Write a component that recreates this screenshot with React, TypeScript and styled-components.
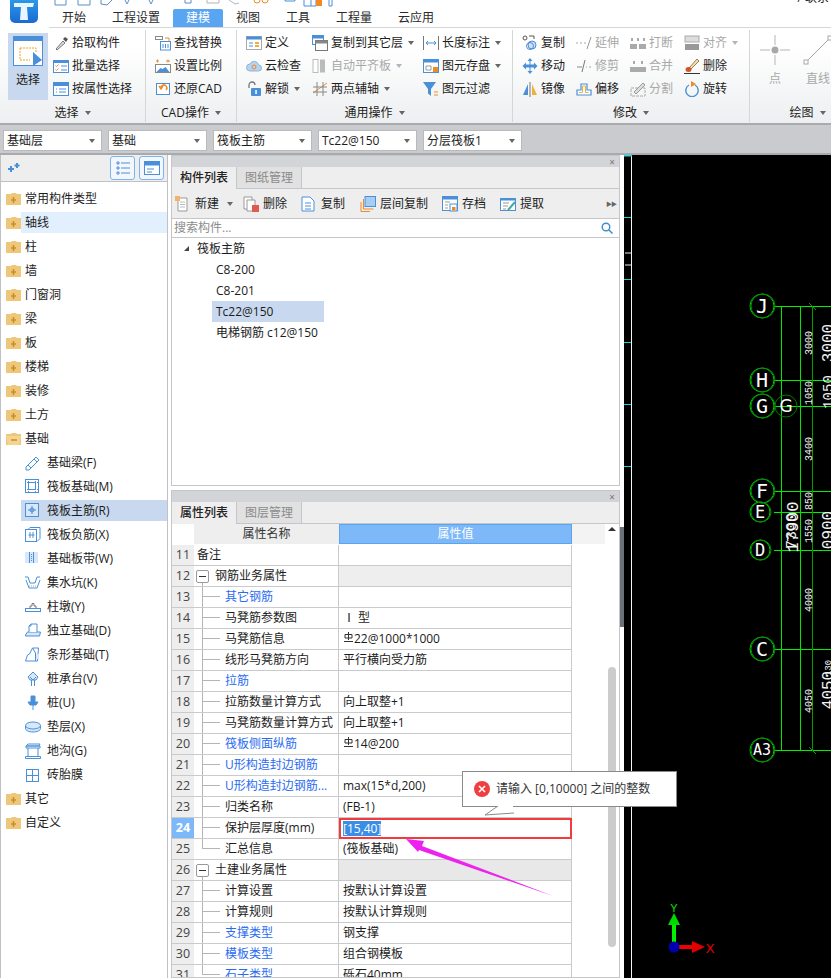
import React from "react";
import styled, { createGlobalStyle } from "styled-components";

const Global = createGlobalStyle`
  html, body { margin: 0; padding: 0; background: #fff; }
  body { font: 12px/1 "Open Sans", "Noto Sans CJK SC", sans-serif; color: #1c1c1c; }
  * { box-sizing: border-box; }
`;

const B = "#4a90d9";
const O = "#f08a24";
const icons: Record<string, React.ReactNode> = {
  pick: <><path d="M3 14l7-8 2 2-8 7z" fill="#ddd" stroke="#777" /><path d="M10 4l2-2 3 2-2 3z" fill="#555" /></>,
  batch: <><rect x="0.500" y="2.500" width="15" height="12" fill="#fff" stroke={B} /><rect x="0.500" y="2.500" width="15" height="2.500" fill={B} /><path d="M2.500 7.500l1 1 2-2M2.500 11.500l1 1 2-2" stroke={O} fill="none" /><path d="M8 8h6M8 12h6" stroke={B} /></>,
  attr: <><rect x="0.500" y="1.500" width="15" height="13" fill="#fff" stroke={B} /><rect x="0.500" y="1.500" width="15" height="3.500" fill={B} /><path d="M3 8h1M6 8h7M3 11h1M6 11h7" stroke={B} /></>,
  find: <><rect x="0.500" y="1.500" width="7" height="3" fill="#fff" stroke="#888" /><path d="M10 3h4v3" stroke={O} fill="none" /><rect x="5.500" y="6.500" width="10" height="8.500" fill="#fff" stroke={B} /><path d="M8 9v4M10.500 9v4M13 9v4" stroke={B} /></>,
  scale: <><path d="M1 3h3M2.500 1.500v3M11 3h4M13 1.500v3" stroke={O} /><rect x="0.500" y="6.500" width="15" height="8" fill="#fff" stroke="#888" /><path d="M1.500 14l4-4 2 1 3-2 4 5z" fill={B} /></>,
  restore: <><rect x="1.500" y="2.500" width="13" height="11" fill="#fff" stroke={B} /><path d="M11 9a3 3 0 1 0-5-1M4 5l2 3 2-3" stroke={O} strokeWidth="1.500" fill="none" /></>,
  define: <><rect x="0.500" y="1.500" width="15" height="13" fill="#fff" stroke="#aaa" /><rect x="0.500" y="1.500" width="15" height="3" fill={B} /><path d="M3 8h4M3 11h4" stroke={B} /><path d="M9 8h4M9 11h4" stroke="#f0b040" strokeWidth="2" /></>,
  cloud: <><path d="M4 13a3.500 3.500 0 0 1 0-7 4.500 4.500 0 0 1 8.500 1 3 3 0 0 1 0 6z" fill="#b6d3f0" stroke="#8ab4de" /><circle cx="8" cy="9" r="2" fill="none" stroke={O} /></>,
  lock: <><path d="M3 7V4a3 3 0 0 1 6 0" fill="none" stroke="#777" strokeWidth="1.300" /><rect x="5" y="7" width="10" height="8" rx="1" fill={B} /><rect x="9.300" y="9" width="1.500" height="4" fill="#fff" /></>,
  copyLayer: <><rect x="0.500" y="0.500" width="11" height="9" fill="#fff" stroke={B} /><rect x="0.500" y="0.500" width="11" height="3" fill={B} /><rect x="3.500" y="5.500" width="12" height="10" fill="#fff" stroke="#777" /><rect x="3.500" y="5.500" width="12" height="3" fill="#888" /></>,
  alignB: <><rect x="1" y="1.500" width="5" height="13" fill="#fff" stroke="#bbb" /><rect x="8" y="1.500" width="5" height="13" fill="#bbb" /></>,
  twoPoint: <><path d="M1 12L15 2" stroke={O} /><path d="M5 1v14M11 1v14M1 6h14M1 11h14" stroke="#888" /></>,
  length: <><path d="M0.500 1v14M15.500 1v14" stroke="#777" /><path d="M3 8h10M3 8l2-2M3 8l2 2M13 8l-2-2M13 8l-2 2" stroke={B} fill="none" /></>,
  save: <><rect x="0.500" y="1.500" width="15" height="13" fill="#fff" stroke={B} /><rect x="0.500" y="1.500" width="15" height="3" fill={B} /><path d="M3 8h5v4H3z" fill="none" stroke="#999" /><rect x="10" y="9" width="5" height="5" fill={O} /></>,
  filter: <><path d="M0 1h13L8 8v7L5 12.500V8z" fill={B} /><path d="M11 11h4M11 14h4" stroke={O} /></>,
  copy: <><circle cx="3" cy="3" r="2" fill="#fff" stroke="#555" /><path d="M7 1h5v3" stroke="#555" fill="none" /><circle cx="10" cy="10" r="4" fill="#cfe2f6" stroke={B} /><circle cx="8" cy="11" r="3.500" fill="none" stroke={B} /></>,
  move: <path d="M8 0l2.500 3h-2v3.500H12v-2l3.500 3.500L12 11.500v-2H8.500V13h2L8 16l-2.500-3h2V9.500H4v2L.5 8 4 4.500v2h3.500V3h-2z" fill={B} />,
  mirror: <><path d="M6 3v11H1z" fill={B} /><path d="M8 1v15" stroke="#777" /><path d="M10 3v11h5z" fill="#f0b040" /></>,
  extend: <><path d="M0 8h2M4 8h2M8 8h2" stroke="#aaa" /><path d="M11 14l4-12" stroke="#999" /></>,
  trim: <><path d="M1 9h5" stroke="#888" /><path d="M10 9h1M13 9h2" stroke="#aaa" /><path d="M6 14l3-12" stroke="#777" /></>,
  offset: <><path d="M1 14V9h4V3h6v6h4v5z" fill="#fff" stroke={B} strokeWidth="1.200" /><path d="M3 11.500h3.500V5h3v6.500h3" fill="none" stroke="#f0b040" /></>,
  broke: <><path d="M1 3h2v3H1zM7 3h2v3H7zM13 3h2v3h-2z" fill="#aaa" /><rect x="0" y="9" width="7" height="5" fill="#aaa" /><rect x="9" y="9" width="7" height="5" fill="#aaa" /></>,
  merge: <><path d="M3 3h2v3H3zM11 3h2v3h-2z" fill="#aaa" /><rect x="0" y="9" width="16" height="5" fill="#aaa" /></>,
  split: <><path d="M1 7h14v8H1z" fill="none" stroke="#aaa" strokeDasharray="3 1" /><path d="M4 11l9-9 2 2-9 9z" fill="#ddd" stroke="#999" /></>,
  alignR: <><rect x="1" y="1" width="14" height="6" fill="#ddd" stroke="#aaa" /><rect x="1" y="9" width="14" height="6" fill="#999" /></>,
  del: <><path d="M5 10l8-9 2 2-8 8z" fill="#f2dcb0" stroke="#a08050" /><ellipse cx="4.500" cy="11.500" rx="3" ry="2.500" fill="#d0562a" /><path d="M0 15.500h16" stroke="#333" /></>,
  rotate: <><path d="M5 4a6.200 6.200 0 1 0 6 0" fill="none" stroke={B} strokeWidth="1.400" /><path d="M7 0v6l5-3z" fill={O} /></>,
  beam: <><path d="M1 12L11 2l3 3L4 15H1z" fill="#fff" stroke={B} /><path d="M3 10l3 3M9 4l3 3" stroke={B} /></>,
  raft: <><rect x="0.500" y="0.500" width="13" height="13" fill="#fff" stroke={B} /><rect x="3.500" y="3.500" width="7" height="7" fill="none" stroke={B} /><path d="M0 3.500h14M0 10.500h14M3.500 0v14M10.500 0v14" stroke={B} strokeDasharray="1 1" /></>,
  main: <><rect x="0.500" y="0.500" width="13" height="13" fill="#d8e8fa" stroke={B} /><path d="M7 3v8M3 7h8" stroke={B} /><circle cx="7" cy="7" r="2" fill="none" stroke={B} /></>,
  neg: <><rect x="0.500" y="2.500" width="11" height="12" fill="#fff" stroke={B} /><path d="M3 2.500l2-2h10v11l-3 3M3.500 8h6M5 5v6M8 5v6" stroke={B} fill="none" /></>,
  band: <><rect x="0" y="1" width="13" height="11" fill="#d8e8fa" /><path d="M4.500 1v11M8.500 1v11" stroke={B} /><path d="M6.500 3v8" stroke={B} strokeDasharray="1 1" /></>,
  pit: <><path d="M0 2h3l2 6h5l2-6h3M1 5l3 8h8l3-8" fill="none" stroke={B} /><path d="M4 11h8" stroke="#aaa" strokeDasharray="1 1" /></>,
  pier: <><rect x="0.500" y="9.500" width="15" height="3" fill="#fff" stroke={B} /><path d="M5 9.500V7h2V4.500h2V7h2v2.500" fill="none" stroke="#777" /></>,
  iso: <><path d="M0.500 12l2-3h13l-1 4h-14z" fill="#d8e8fa" stroke={B} /><path d="M4 9V3l2-2h6v8" fill="#fff" stroke={B} /><path d="M6 1v2H4" stroke={B} fill="none" /></>,
  strip: <><path d="M0.500 14l2-6 2-1 3-6h6l-1 13z" fill="#fff" stroke={B} /><path d="M7.500 1l3 5v8" stroke={B} fill="none" /><rect x="11" y="7" width="3" height="5" fill="#d8e8fa" /></>,
  cap: <><path d="M8 1l5 5-2 3H5L3 6z" fill="#d8e8fa" stroke={B} /><path d="M6.500 9v6M9.500 9v6M5 6l3 3 3-3" stroke={B} fill="none" /></>,
  pile: <><path d="M6 1h4v6H6zM3 7h10l-2 3H5zM8 10v5" fill={B} stroke={B} /></>,
  cushion: <><path d="M0.500 6.500v3c0 2 3.500 3.500 7.500 3.500s7.500-1.500 7.500-3.500v-3" fill="#d8e8fa" stroke={B} /><ellipse cx="8" cy="6.500" rx="7.500" ry="3.500" fill="#d8e8fa" stroke={B} /></>,
  trench: <><path d="M1 3h13l1-2H3zM1 3h14v2H1zM3 5v8M13 5v8M0.500 13.500h15v2H.5z" fill="#fff" stroke={B} /></>,
  brick: <><rect x="1.500" y="2.500" width="12" height="12" fill="#fff" stroke={B} /><path d="M7.500 2.500v12M1.500 8.500h12" stroke={B} /></>,
  newDoc: <><path d="M3 2h9v13H3z" fill="#fff" stroke="#999" /><path d="M5 6h5M5 8.500h5M5 11h5" stroke="#bbb" /><rect x="0" y="0" width="5" height="5" fill="#f6b26b" /></>,
  delDoc: <><path d="M1 1h8v12H1z" fill="#fff" stroke="#999" /><path d="M4 4h8v11H4z" fill="#fff" stroke="#999" /><rect x="9" y="9" width="7" height="7" fill="#e05a50" /></>,
  copyDoc: <><path d="M1 1h8l4 4v10H1z" fill="#fff" stroke={B} /><path d="M4 7h6M4 10h6M4 13h6" stroke={B} /></>,
  layerCopy: <><rect x="5" y="0.500" width="10.500" height="10" fill="#a8cdf5" stroke={B} /><path d="M3.500 3v10h10M1 6v9.500h9" stroke={O} fill="none" /></>,
  archive: <><rect x="0.500" y="0.500" width="15" height="14" fill="#fff" stroke={B} /><rect x="0.500" y="0.500" width="15" height="3" fill={B} /><path d="M3 6h5M3 9h3M3 12h3" stroke="#999" /><rect x="8" y="8" width="7" height="7" fill="#fff" stroke={B} /><rect x="10" y="11" width="3.500" height="3.500" fill={O} /></>,
  extract: <><rect x="0.500" y="2.500" width="15" height="12" fill="#fff" stroke={B} /><rect x="0.500" y="2.500" width="15" height="2" fill={B} /><path d="M3 7h6M3 10h5M3 13h3" stroke="#999" /><path d="M8 14l7-8" stroke="#4a9" strokeWidth="2" /></>,
};

const Svg = styled.svg<{ $s: number }>`
  width: ${(p) => p.$s}px;
  height: ${(p) => p.$s}px;
  flex: none;
  display: block;
`;
const Ico = ({ n, s = 16 }: { n: string; s?: number }) => (
  <Svg $s={s} viewBox="0 0 16 16">{icons[n]}</Svg>
);

const Page = styled.div`
  position: relative;
  width: 831px;
  height: 978px;
  overflow: hidden;
  display: flex;
  flex-direction: column;
  background: #fff;
`;

/* Title strip */
const TopBar = styled.div`
  height: 28px;
  display: flex;
  flex: none;
`;
const LogoTile = styled.div`
  width: 45px;
  padding-left: 10px;
  background: #fff;
  flex: none;
`;
const TopRight = styled.div`
  flex: 1;
  margin-left: 4px;
  display: flex;
  flex-direction: column;
  border-bottom: 1px solid #d6d6d6;
`;
const QuickRow = styled.div`
  height: 9px;
  display: flex;
  justify-content: space-between;
  overflow: hidden;
`;
const TopHint = styled.span`
  margin-top: -9px;
  padding-right: 2px;
  font-size: 12px;
  line-height: 14px;
  white-space: nowrap;
`;
const Tabs = styled.div`
  flex: 1;
  display: flex;
`;
const Tab = styled.div<{ $on?: boolean }>`
  padding: 0 13px;
  display: flex;
  align-items: center;
  font-size: 12px;
  color: ${(p) => (p.$on ? "#fff" : "#2a2a2a")};
  background: ${(p) => (p.$on ? "#5aa5f2" : "transparent")};
  border-radius: 2px 2px 0 0;
`;

/* Ribbon */
const Ribbon = styled.div`
  height: 97px;
  flex: none;
  display: flex;
  background: linear-gradient(#ffffff 20%, #edeff0);
  border-bottom: 2px solid #a8aaac;
`;
const Group = styled.div<{ $w: number; $last?: boolean }>`
  width: ${(p) => p.$w}px;
  flex: none;
  display: flex;
  flex-direction: column;
  padding-top: 1px;
  margin: 2px 0 1px;
  border-right: ${(p) => (p.$last ? "none" : "1px solid #d4d6d8")};
`;
const GroupBody = styled.div`
  height: 69px;
  display: flex;
  flex: none;
`;
const GroupLabel = styled.div<{ $pl?: number }>`
  flex: 1;
  display: flex;
  align-items: center;
  justify-content: center;
  gap: 6px;
  padding: 3px 0 0 ${(p) => p.$pl ?? 0}px;
  font-size: 12px;
`;
const Caret = styled.i<{ $dim?: boolean }>`
  flex: none;
  width: 0;
  height: 0;
  border: 3px solid transparent;
  border-top: 4px solid ${(p) => (p.$dim ? "#b5b5b5" : "#666")};
  border-bottom: 0;
  display: block;
`;
const Col = styled.div<{ $w: number; $ml?: number }>`
  width: ${(p) => p.$w}px;
  margin-left: ${(p) => p.$ml ?? 0}px;
  flex: none;
  display: flex;
  flex-direction: column;
`;
const Item = styled.div<{ $off?: boolean }>`
  height: 23px;
  display: flex;
  align-items: center;
  gap: 3px;
  font-size: 12px;
  white-space: nowrap;
  color: ${(p) => (p.$off ? "#a8a8a8" : "#1c1c1c")};
  ${Caret} { margin-left: 2px; }
`;
const BigButton = styled.div<{ $on?: boolean; $off?: boolean; $w: number; $ml: number }>`
  width: ${(p) => p.$w}px;
  margin: 2px 0 0 ${(p) => p.$ml}px;
  height: 67px;
  flex: none;
  display: flex;
  flex-direction: column;
  align-items: center;
  padding-top: 2px;
  gap: 8px;
  background: ${(p) => (p.$on ? "#c8d8ee" : "transparent")};
  color: ${(p) => (p.$off ? "#a8a8a8" : "#1c1c1c")};
`;

/* Combo bar */
const ComboBar = styled.div`
  height: 30px;
  flex: none;
  background: #c9cbce;
  display: flex;
  gap: 6px;
  padding: 5px 3px 3px;
  border-bottom: 2px solid #a8aaac;
`;
const Combo = styled.div`
  width: 99px;
  height: 21px;
  background: #fff;
  border: 1px solid #b8babc;
  display: flex;
  align-items: center;
  justify-content: space-between;
  padding: 0 6px 0 3px;
  font-size: 12px;
`;

/* Work area */
const Work = styled.div`
  flex: 1;
  min-height: 0;
  display: flex;
`;
const Left = styled.div`
  width: 168px;
  flex: none;
  margin-right: 3px;
  border-left: 1px solid #bfc1c4;
  border-right: 1px solid #bfc1c4;
  display: flex;
  flex-direction: column;
`;
const LeftHead = styled.div`
  height: 27px;
  flex: none;
  background: #eeeeee;
  border-bottom: 1px solid #bfc1c4;
  display: flex;
  align-items: center;
  padding: 0 3px 0 6px;
  gap: 4px;
`;
const Sparks = styled.div`
  flex: 1;
`;
const HeadBtn = styled.div`
  width: 25px;
  height: 24px;
  border: 1px solid #7db4ee;
  border-radius: 3px;
  background: #f3f7fb;
  display: flex;
  align-items: center;
  justify-content: center;
`;
const Tree = styled.div`
  padding-top: 6px;
  display: flex;
  flex-direction: column;
  gap: 3px;
`;
const TreeRow = styled.div<{ $sel?: string; $child?: boolean }>`
  height: 21px;
  display: flex;
  align-items: center;
  padding-left: ${(p) => (p.$child ? 24 : 5)}px;
  font-size: 12px;
  white-space: nowrap;
  background: linear-gradient(90deg, transparent 20px, ${(p) => p.$sel ?? "transparent"} 20px);
`;
const FolderWrap = styled.span`
  width: 19px;
  flex: none;
`;
const ChildIcon = styled.span`
  width: 22px;
  flex: none;
`;

const Mid = styled.div`
  width: 449px;
  flex: none;
  display: flex;
  flex-direction: column;
  gap: 4px;
`;
const Panel = styled.div<{ $h?: number }>`
  ${(p) => (p.$h ? `height:${p.$h}px;flex:none;` : "flex:1;min-height:0;")}
  border: 1px solid #c4c6c9;
  display: flex;
  flex-direction: column;
  overflow: hidden;
`;
const PanelTitle = styled.div`
  height: 11px;
  flex: none;
  background: #d2d4d8;
  display: flex;
  align-items: center;
  justify-content: flex-end;
  padding-right: 4px;
  font-size: 10px;
  line-height: 10px;
  color: #777;
`;
const PanelTabs = styled.div`
  height: 22px;
  flex: none;
  background: #eeeeee;
  display: flex;
  border-bottom: 1px solid #c4c6c9;
`;
const PanelTab = styled.div<{ $on?: boolean }>`
  width: 65px;
  display: flex;
  align-items: center;
  justify-content: center;
  font-size: 12px;
  font-weight: ${(p) => (p.$on ? 500 : 400)};
  color: ${(p) => (p.$on ? "#222" : "#8a8a8a")};
  background: ${(p) => (p.$on ? "#eeeeee" : "#e1e1e1")};
  border-right: 1px solid #c4c6c9;
  margin-bottom: ${(p) => (p.$on ? "-1px" : "0")};
`;
const Toolbar = styled.div`
  height: 30px;
  flex: none;
  background: #eeeeee;
  border-bottom: 1px solid #c4c6c9;
  display: flex;
  align-items: center;
  padding: 0 3px 0 3px;
  font-size: 12px;
`;
const Tool = styled.div<{ $ml: number }>`
  display: flex;
  align-items: center;
  gap: 4px;
  margin-left: ${(p) => p.$ml}px;
  white-space: nowrap;
`;
const ToolEnd = styled.div`
  margin-left: auto;
  font-size: 6px;
  letter-spacing: -1px;
  color: #666;
`;
const Search = styled.div`
  height: 19px;
  flex: none;
  border-bottom: 1px solid #c4c6c9;
  display: flex;
  align-items: center;
  justify-content: space-between;
  padding: 0 6px 0 2px;
  font-size: 12px;
  color: #8c8c8c;
`;
const CompTree = styled.div`
  padding: 0 0 0 40px;
  display: flex;
  flex-direction: column;
`;
const CompHead = styled.div`
  height: 21px;
  display: flex;
  align-items: center;
  gap: 7px;
  margin-left: -30px;
  font-size: 12px;
`;
const CompRow = styled.div<{ $on?: boolean }>`
  width: 112px;
  height: 21px;
  padding-left: 4px;
  display: flex;
  align-items: center;
  white-space: nowrap;
  font-size: 12px;
  background: ${(p) => (p.$on ? "#c8d8ee" : "transparent")};
`;

/* property grid */
const GridWrap = styled.div`
  flex: 1;
  min-height: 0;
  display: flex;
`;
const Grid = styled.div`
  width: 400px;
  flex: none;
  display: flex;
  flex-direction: column;
`;
const Head = styled.div`
  height: 21px;
  flex: none;
  display: grid;
  grid-template-columns: 22px 145px 233px;
  font-size: 12px;
`;
const HeadCell = styled.div<{ $blue?: boolean; $blank?: boolean }>`
  display: flex;
  align-items: center;
  justify-content: center;
  margin-bottom: 1px;
  background: ${(p) => (p.$blank ? "#fff" : p.$blue ? "#7db8f8" : "#eeeeee")};
  color: ${(p) => (p.$blue ? "#fff" : "#333")};
  ${(p) => (p.$blue ? "border:1px solid #5aa5f2;" : "")}
`;
const Row = styled.div`
  height: 21px;
  flex: none;
  display: grid;
  grid-template-columns: 22px 145px 233px;
  font-size: 12px;
`;
const NumCell = styled.div<{ $on?: boolean }>`
  display: flex;
  align-items: center;
  justify-content: center;
  font-size: 12.5px;
  background: ${(p) => (p.$on ? "#7db8f8" : "#eeeeee")};
  color: ${(p) => (p.$on ? "#fff" : "#444")};
  font-weight: ${(p) => (p.$on ? 700 : 400)};
  border-bottom: 1px solid #c8cacc;
`;
const NameCell = styled.div<{ $blue?: boolean }>`
  display: flex;
  align-items: center;
  white-space: nowrap;
  overflow: hidden;
  color: ${(p) => (p.$blue ? "#2a6cf0" : "#1c1c1c")};
  border-bottom: 1px solid #c8cacc;
  border-right: 1px solid #c8cacc;
`;
const ValueCell = styled.div<{ $bg?: string; $focus?: boolean }>`
  display: flex;
  align-items: center;
  white-space: nowrap;
  padding-left: ${(p) => (p.$focus ? 2 : 4)}px;
  background: ${(p) => p.$bg ?? "#fff"};
  border-bottom: ${(p) => (p.$focus ? "2px solid #f43a3a" : "1px solid #c8cacc")};
  border-right: ${(p) => (p.$focus ? "2px solid #f43a3a" : "1px solid #c8cacc")};
  ${(p) => (p.$focus ? "border-top:2px solid #f43a3a;border-left:2px solid #f43a3a;" : "")}
`;
const Selected = styled.span`
  background: #3a8ee6;
  color: #fff;
  line-height: 15px;
`;
const GuideBox = styled.div<{ $half?: boolean }>`
  width: 22px;
  margin-left: 8px;
  margin-right: 1px;
  flex: none;
  align-self: flex-start;
  height: ${(p) => (p.$half ? "50%" : "21px")};
  border-left: 1px solid #b5b5b5;
  display: flex;
`;
const GuideDash = styled.div<{ $half?: boolean }>`
  width: 17px;
  height: ${(p) => (p.$half ? "100%" : "10px")};
  border-bottom: 1px solid #b5b5b5;
`;
const Toggle = styled.span`
  position: relative;
  width: 13px;
  height: 13px;
  margin: 0 6px 0 2px;
  flex: none;
  border: 1px solid #999;
  border-radius: 2px;
  background: #fff;
  display: flex;
  align-items: center;
  justify-content: center;
  &::before {
    content: "";
    width: 7px;
    height: 1px;
    background: #333;
  }
  &::after {
    content: "";
    position: absolute;
    left: 5px;
    top: 12px;
    width: 1px;
    height: 5px;
    background: #b5b5b5;
  }
`;
const Strip = styled.div`
  width: 33px;
  height: 20px;
  flex: none;
  background: #f3f3f3;
`;
const Scroll = styled.div`
  flex: 1;
  display: flex;
  flex-direction: column;
  align-items: center;
`;
const ScrollUp = styled.i`
  margin-top: 3px;
  width: 0;
  height: 0;
  border: 4px solid transparent;
  border-top: 0;
  border-bottom: 4px solid #333;
  display: block;
`;
const Thumb = styled.div`
  margin-top: 136px;
  width: 8px;
  height: 280px;
  border-radius: 4px;
  background: #cccccc;
`;

const Splitter = styled.div`
  width: 4px;
  flex: none;
  background: #fff;
`;
const SplitHandle = styled.div`
  margin-top: 372px;
  height: 100px;
  background: #6b7178;
`;
const Canvas = styled.div`
  flex: 1;
  background: #000;
  min-width: 0;
`;
const CadSvg = styled.svg`
  display: block;
  width: 207px;
  height: 823px;
`;

/* overlays */
const Tip = styled.div`
  position: absolute;
  left: 462px;
  top: 771px;
  width: 215px;
  height: 36px;
  background: #fff;
  border: 1px solid #8a8a8a;
  display: flex;
  align-items: center;
  gap: 6px;
  padding-left: 11px;
  font-size: 12px;
  white-space: nowrap;
  color: #333;
`;
const TipTail = styled.svg`
  position: absolute;
  left: 484px;
  top: 805px;
  width: 30px;
  height: 12px;
`;
const ArrowSvg = styled.svg`
  position: absolute;
  left: 400px;
  top: 830px;
  width: 160px;
  height: 70px;
`;

const Rebar = () => (
  <Svg $s={11} viewBox="0 0 11 11" style={{ marginBottom: 4 }}>
    <path d="M5.500 0v8M2 2.500h7v3.500H2zM1 9.500h9" fill="none" stroke="#333" />
  </Svg>
);

const Folder = ({ open }: { open?: boolean }) => (
  <Svg $s={15} viewBox="0 0 15 15">
    <path d="M0 3h5l1-1h4l1 1h4v11H0z" fill="#eec77a" />
    {open ? <path d="M0 5h15l-2 9H2z" fill="#f3d491" /> : null}
    <path d={open ? "M5 9h6" : "M7.500 6v6M5 9h5"} stroke="#c68f2c" strokeWidth="1.500" />
  </Svg>
);

const topTree = ["常用构件类型", "轴线", "柱", "墙", "门窗洞", "梁", "板", "楼梯", "装修", "土方"];
const children: [string, string, boolean?][] = [
  ["beam", "基础梁(F)"], ["raft", "筏板基础(M)"], ["main", "筏板主筋(R)", true], ["neg", "筏板负筋(X)"],
  ["band", "基础板带(W)"], ["pit", "集水坑(K)"], ["pier", "柱墩(Y)"], ["iso", "独立基础(D)"],
  ["strip", "条形基础(T)"], ["cap", "桩承台(V)"], ["pile", "桩(U)"], ["cushion", "垫层(X)"],
  ["trench", "地沟(G)"], ["brick", "砖胎膜"],
];

type R = { n: number; name: string; value?: React.ReactNode; kind?: "plain" | "group" | "last"; blue?: boolean; bg?: string; focus?: boolean };
const rows: R[] = [
  { n: 11, name: "备注", kind: "plain" },
  { n: 12, name: "钢筋业务属性", kind: "group", bg: "#eeeeee" },
  { n: 13, name: "其它钢筋", blue: true },
  { n: 14, name: "马凳筋参数图", value: " Ⅰ 型" },
  { n: 15, name: "马凳筋信息", value: <><Rebar />22@1000*1000</> },
  { n: 16, name: "线形马凳筋方向", value: "平行横向受力筋" },
  { n: 17, name: "拉筋", blue: true },
  { n: 18, name: "拉筋数量计算方式", value: "向上取整+1" },
  { n: 19, name: "马凳筋数量计算方式", value: "向上取整+1" },
  { n: 20, name: "筏板侧面纵筋", blue: true, value: <><Rebar />14@200</> },
  { n: 21, name: "U形构造封边钢筋", blue: true },
  { n: 22, name: "U形构造封边钢筋...", blue: true, value: "max(15*d,200)" },
  { n: 23, name: "归类名称", value: "(FB-1)" },
  { n: 24, name: "保护层厚度(mm)", value: <Selected>[15,40]</Selected>, focus: true },
  { n: 25, name: "汇总信息", value: "(筏板基础)", kind: "last" },
  { n: 26, name: "土建业务属性", kind: "group", bg: "#e8e8e8" },
  { n: 27, name: "计算设置", value: "按默认计算设置" },
  { n: 28, name: "计算规则", value: "按默认计算规则" },
  { n: 29, name: "支撑类型", blue: true, value: "钢支撑" },
  { n: 30, name: "模板类型", blue: true, value: "组合钢模板" },
  { n: 31, name: "石子类型", blue: true, value: "砾石40mm", kind: "last" },
];

const Bubble = ({ cx, cy, r = 12, t, fs = 20 }: { cx: number; cy: number; r?: number; t: string; fs?: number }) => (
  <g>
    <circle cx={cx} cy={cy} r={r} fill="none" stroke="#00c800" strokeWidth="1" />
    <circle cx={cx + 1} cy={cy} r={r} fill="none" stroke="#008c00" strokeWidth="1" />
    <text x={cx} y={cy + fs * 0.36} textAnchor="middle" fontSize={fs} fill="#fff" fontFamily="'DejaVu Sans Mono', monospace">{t}</text>
  </g>
);
const Dim = ({ x, y, t, fs = 10 }: { x: number; y: number; t: string; fs?: number }) => (
  <text transform={`translate(${x} ${y}) rotate(-90)`} textAnchor="middle" fontSize={fs} fill="#f4f4f4" fontFamily="'Liberation Mono', monospace">{t}</text>
);

const Cad = () => {
  const ys = [306, 380, 406, 491, 512, 550, 649, 750];
  return (
    <CadSvg viewBox="624 155 207 823">
      <path d="M631.500 155V978" stroke="#f4f4f4" />
      <path d="M624 155.500h8" stroke="#19e0e0" strokeWidth="2" />
      {[217, 279, 342, 404, 466].map((y) => <path key={y} d={`M624 ${y}.5h7`} stroke="#19d0e0" />)}
      <path d="M625 253h6M625 265h6" stroke="#eee" />
      {ys.map((y) => <path key={y} d={`M774 ${y}.5H831`} stroke="#00f000" />)}
      <path d="M781.500 306V750M800.500 306V750" stroke="#00e800" />
      <path d="M812.500 306V750" stroke="#009c00" />
      <path d="M809 303l7 7M809 747l7 7" stroke="#009c00" />
      <Bubble cx={762} cy={306} t="J" />
      <Bubble cx={762} cy={380} t="H" />
      <Bubble cx={762} cy={406} t="G" />
      <circle cx={786} cy={406} r={11} fill="none" stroke="#007800" />
      <text x={786} y={412} textAnchor="middle" fontSize="17" fill="#fff" fontFamily="'DejaVu Sans', sans-serif">G</text>
      <Bubble cx={762} cy={491} t="F" />
      <Bubble cx={760} cy={512} r={10} t="E" fs={17} />
      <Bubble cx={760} cy={550} r={10} t="D" fs={17} />
      <Bubble cx={762} cy={649} t="C" />
      <Bubble cx={762} cy={750} t="A3" fs={15} />
      <Dim x={812} y={343} t="3000" />
      <Dim x={812} y={393} t="1050" />
      <Dim x={812} y={449} t="3400" />
      <Dim x={812} y={501} t="850" />
      <Dim x={812} y={531} t="1550" />
      <Dim x={812} y={600} t="4000" />
      <Dim x={812} y={701} t="4050" />
      <Dim x={798} y={527} t="17900" fs={17} />
      <Dim x={796} y={531} t="7300" fs={15} />
      <Dim x={833} y={343} t="3000" fs={16} />
      <Dim x={833} y={392} t="1050" fs={14} />
      <Dim x={833} y={530} t="0900" fs={16} />
      <Dim x={833} y={690} t="4050" fs={16} />
      <Dim x={831} y={668} t="130" fs={9} />
      <path d="M674 947V925" stroke="#00f000" strokeWidth="4" />
      <path d="M668 925l6-12 6 12z" fill="#00d800" />
      <path d="M674 947h24" stroke="#f00000" strokeWidth="4" />
      <path d="M692 941l13 6-13 6z" fill="#e00000" />
      <circle cx="674" cy="947" r="5.500" fill="#0000b0" />
      <text x="674" y="912" textAnchor="middle" fontSize="11" fill="#00e800" fontFamily="'Liberation Sans', sans-serif">Y</text>
      <text x="710" y="953" textAnchor="middle" fontSize="13" fill="#f00000" fontFamily="'Liberation Sans', sans-serif">X</text>
    </CadSvg>
  );
};

const RItem = ({ n, t, caret, off }: { n: string; t: string; caret?: boolean; off?: boolean }) => (
  <Item $off={off}>
    <Ico n={n} />
    <span>{t}</span>
    {caret ? <Caret $dim={off} /> : null}
  </Item>
);

export default function App() {
  return (
    <Page>
      <Global />
      <TopBar>
        <LogoTile>
          <svg width="28" height="24" viewBox="0 0 28 24" style={{ display: "block" }}>
            <defs>
              <linearGradient id="lg" x1="0" y1="0" x2="0" y2="1">
                <stop offset="0" stopColor="#2fa4f0" />
                <stop offset="1" stopColor="#1a6ad2" />
              </linearGradient>
            </defs>
            <rect x="0" y="-6" width="28" height="29" rx="5" fill="url(#lg)" />
            <path d="M4 3h20l-1 4h-6l1 13h-8l1-13H4z" fill="#e9f6ff" />
          </svg>
        </LogoTile>
        <TopRight>
          <QuickRow>
            <svg width="300" height="9" viewBox="0 0 300 9" style={{ display: "block", flex: "none" }}>
              <path d="M6 0v5h11V0M29 0v5h12V0M52 0v4l6 1 5-5M76 0l2 4 2-4M100 0l2 4 2-4M136 0v3h6V0" fill="none" stroke="#5b8fc7" />
              <path d="M158 0v3h12V0M180 0l6 4 4-1" fill="none" stroke="#b5b5b5" />
              <circle cx="208" cy="0" r="3" fill="none" stroke={O} />
              <circle cx="216" cy="0" r="3" fill="none" stroke={O} />
              <path d="M236 0v1h10V0M255 0v6h12V0M262 0v6M280 0v6h3V0" fill="none" stroke="#4a90d9" />
              <rect x="267" y="0" width="6" height="6" fill={O} />
            </svg>
            <TopHint>/ 联系</TopHint>
          </QuickRow>
          <Tabs>
            <Tab>开始</Tab>
            <Tab>工程设置</Tab>
            <Tab $on>建模</Tab>
            <Tab>视图</Tab>
            <Tab>工具</Tab>
            <Tab>工程量</Tab>
            <Tab>云应用</Tab>
          </Tabs>
        </TopRight>
      </TopBar>

      <Ribbon>
        <Group $w={146}>
          <GroupBody>
            <BigButton $on $w={40} $ml={8}>
              <svg width="30" height="30" viewBox="0 0 30 30" style={{ display: "block", flex: "none", marginTop: 1 }}>
                <rect x="0.500" y="0.500" width="29" height="29" fill="#fff" stroke="#4a90d9" />
                <rect x="0" y="0" width="30" height="5" fill="#4a90d9" />
                <path d="M7 12h16v4" fill="none" stroke="#f0a020" strokeDasharray="2 1" />
                <path d="M7 12v12h10" fill="none" stroke="#f0a020" strokeDasharray="2 1" />
                <path d="M20 16l9 8-9 6z" fill="#4a90d9" />
              </svg>
              <span>选择</span>
            </BigButton>
            <Col $w={90} $ml={5}>
              <RItem n="pick" t="拾取构件" />
              <RItem n="batch" t="批量选择" />
              <RItem n="attr" t="按属性选择" />
            </Col>
          </GroupBody>
          <GroupLabel>选择<Caret /></GroupLabel>
        </Group>
        <Group $w={91}>
          <GroupBody>
            <Col $w={80} $ml={9}>
              <RItem n="find" t="查找替换" />
              <RItem n="scale" t="设置比例" />
              <RItem n="restore" t="还原CAD" />
            </Col>
          </GroupBody>
          <GroupLabel>CAD操作<Caret /></GroupLabel>
        </Group>
        <Group $w={276}>
          <GroupBody>
            <Col $w={66} $ml={9}>
              <RItem n="define" t="定义" />
              <RItem n="cloud" t="云检查" />
              <RItem n="lock" t="解锁" caret />
            </Col>
            <Col $w={111}>
              <RItem n="copyLayer" t="复制到其它层" caret />
              <RItem n="alignB" t="自动平齐板" caret off />
              <RItem n="twoPoint" t="两点辅轴" caret />
            </Col>
            <Col $w={85}>
              <RItem n="length" t="长度标注" caret />
              <RItem n="save" t="图元存盘" caret />
              <RItem n="filter" t="图元过滤" />
            </Col>
          </GroupBody>
          <GroupLabel>通用操作<Caret /></GroupLabel>
        </Group>
        <Group $w={237}>
          <GroupBody>
            <Col $w={54} $ml={9}>
              <RItem n="copy" t="复制" />
              <RItem n="move" t="移动" />
              <RItem n="mirror" t="镜像" />
            </Col>
            <Col $w={54}>
              <RItem n="extend" t="延伸" off />
              <RItem n="trim" t="修剪" off />
              <RItem n="offset" t="偏移" />
            </Col>
            <Col $w={54}>
              <RItem n="broke" t="打断" off />
              <RItem n="merge" t="合并" off />
              <RItem n="split" t="分割" off />
            </Col>
            <Col $w={62}>
              <RItem n="alignR" t="对齐" caret off />
              <RItem n="del" t="删除" />
              <RItem n="rotate" t="旋转" />
            </Col>
          </GroupBody>
          <GroupLabel>修改<Caret /></GroupLabel>
        </Group>
        <Group $w={81} $last>
          <GroupBody>
            <BigButton $off $w={30} $ml={10}>
              <svg width="30" height="30" viewBox="0 0 30 30" style={{ display: "block", flex: "none" }}>
                <path d="M15 0v10M15 20v10M0 15h10M20 15h10" stroke="#b5b5b5" />
                <circle cx="15" cy="15" r="3.500" fill="#a8a8a8" />
              </svg>
              <span>点</span>
            </BigButton>
            <BigButton $off $w={30} $ml={13}>
              <svg width="30" height="30" viewBox="0 0 30 30" style={{ display: "block", flex: "none" }}>
                <path d="M3 27L27 3" stroke="#a8a8a8" />
                <rect x="1" y="25" width="4" height="4" fill="#fff" stroke="#a8a8a8" />
                <rect x="25" y="1" width="4" height="4" fill="#fff" stroke="#a8a8a8" />
              </svg>
              <span>直线</span>
            </BigButton>
          </GroupBody>
          <GroupLabel $pl={34}>绘图<Caret /></GroupLabel>
        </Group>
      </Ribbon>

      <ComboBar>
        {["基础层", "基础", "筏板主筋", "Tc22@150", "分层筏板1"].map((t) => (
          <Combo key={t}>{t}<Caret /></Combo>
        ))}
      </ComboBar>

      <Work>
        <Left>
          <LeftHead>
            <Sparks>
              <svg width="14" height="12" viewBox="0 0 14 12" style={{ display: "block" }}>
                <path d="M4 4v6M1 7h6M10 1v5M7.500 3.500h5" stroke="#4a90d9" strokeWidth="2" />
              </svg>
            </Sparks>
            <HeadBtn>
              <svg width="14" height="14" viewBox="0 0 14 14">
                <path d="M1 1h2v2H1zM1 6h2v2H1zM1 11h2v2H1z" fill="none" stroke="#4a90d9" />
                <path d="M5 2h9M5 7h9M5 12h9" stroke="#4a90d9" />
              </svg>
            </HeadBtn>
            <HeadBtn>
              <svg width="16" height="14" viewBox="0 0 16 14">
                <rect x="0.500" y="0.500" width="15" height="13" fill="#fff" stroke="#4a90d9" />
                <rect x="0.500" y="0.500" width="15" height="4" fill="#4a90d9" />
                <path d="M3 8h7M3 11h5" stroke="#4a90d9" />
              </svg>
            </HeadBtn>
          </LeftHead>
          <Tree>
            {topTree.map((t) => (
              <TreeRow key={t} $sel={t === "轴线" ? "#e2f0fd" : undefined}>
                <FolderWrap><Folder /></FolderWrap>{t}
              </TreeRow>
            ))}
            <TreeRow><FolderWrap><Folder open /></FolderWrap>基础</TreeRow>
            {children.map(([ic, t, sel]) => (
              <TreeRow key={t} $child $sel={sel ? "#c8d8ee" : undefined}>
                <ChildIcon><Ico n={ic} /></ChildIcon>{t}
              </TreeRow>
            ))}
            <TreeRow><FolderWrap><Folder /></FolderWrap>其它</TreeRow>
            <TreeRow><FolderWrap><Folder /></FolderWrap>自定义</TreeRow>
          </Tree>
        </Left>

        <Mid>
          <Panel $h={331}>
            <PanelTitle>×</PanelTitle>
            <PanelTabs>
              <PanelTab $on>构件列表</PanelTab>
              <PanelTab>图纸管理</PanelTab>
            </PanelTabs>
            <Toolbar>
              <Tool $ml={0}><Ico n="newDoc" />新建<Caret style={{ marginLeft: 4 }} /></Tool>
              <Tool $ml={10}><Ico n="delDoc" />删除</Tool>
              <Tool $ml={14}><Ico n="copyDoc" />复制</Tool>
              <Tool $ml={15}><Ico n="layerCopy" />层间复制</Tool>
              <Tool $ml={14}><Ico n="archive" />存档</Tool>
              <Tool $ml={14}><Ico n="extract" />提取</Tool>
              <ToolEnd>▶▶</ToolEnd>
            </Toolbar>
            <Search>
              搜索构件...
              <svg width="12" height="12" viewBox="0 0 12 12">
                <circle cx="5" cy="5" r="3.800" fill="none" stroke="#3a8fc8" strokeWidth="1.400" />
                <path d="M8 8l3.500 3.500" stroke="#3a8fc8" strokeWidth="1.500" />
              </svg>
            </Search>
            <CompTree>
              <CompHead>
                <svg width="7" height="7" viewBox="0 0 7 7" style={{ display: "block", marginLeft: 1 }}>
                  <path d="M6 1v5H1z" fill="#444" />
                </svg>
                <span>筏板主筋</span>
              </CompHead>
              <CompRow>C8-200</CompRow>
              <CompRow>C8-201</CompRow>
              <CompRow $on>Tc22@150</CompRow>
              <CompRow>电梯钢筋 c12@150</CompRow>
            </CompTree>
          </Panel>

          <Panel>
            <PanelTitle>×</PanelTitle>
            <PanelTabs>
              <PanelTab $on>属性列表</PanelTab>
              <PanelTab>图层管理</PanelTab>
            </PanelTabs>
            <GridWrap>
              <Grid>
                <Head>
                  <HeadCell $blank />
                  <HeadCell>属性名称</HeadCell>
                  <HeadCell $blue>属性值</HeadCell>
                </Head>
                {rows.map((r) => (
                  <Row key={r.n}>
                    <NumCell $on={r.focus}>{r.n}</NumCell>
                    <NameCell $blue={r.blue}>
                      {r.kind === "plain" ? <span style={{ marginLeft: 3 }} /> : null}
                      {r.kind === "group" ? <Toggle /> : null}
                      {r.kind === undefined ? <GuideBox><GuideDash /></GuideBox> : null}
                      {r.kind === "last" ? <GuideBox $half><GuideDash $half /></GuideBox> : null}
                      {r.name}
                    </NameCell>
                    <ValueCell $bg={r.bg} $focus={r.focus}>{r.value}</ValueCell>
                  </Row>
                ))}
              </Grid>
              <Strip />
              <Scroll>
                <ScrollUp />
                <Thumb />
              </Scroll>
            </GridWrap>
          </Panel>
        </Mid>

        <Splitter><SplitHandle /></Splitter>
        <Canvas><Cad /></Canvas>
      </Work>

      <ArrowSvg viewBox="400 830 160 70">
        <path d="M406 839L424 841L422 846L553 896L419 850L418 852z" fill="#ee22ee" />
      </ArrowSvg>
      <Tip>
        <svg width="16" height="16" viewBox="0 0 16 16" style={{ display: "block", flex: "none" }}>
          <circle cx="8" cy="8" r="8" fill="#ee4040" />
          <path d="M5 5l6 6M11 5l-6 6" stroke="#fff" strokeWidth="1.600" />
        </svg>
        请输入 [0,10000] 之间的整数
      </Tip>
      <TipTail viewBox="0 0 30 12">
        <path d="M1 10L14 1H29L30 8z" fill="#fff" stroke="none" />
        <path d="M1 10L14 1M1 10L30 8" fill="none" stroke="#8a8a8a" />
      </TipTail>
    </Page>
  );
}
